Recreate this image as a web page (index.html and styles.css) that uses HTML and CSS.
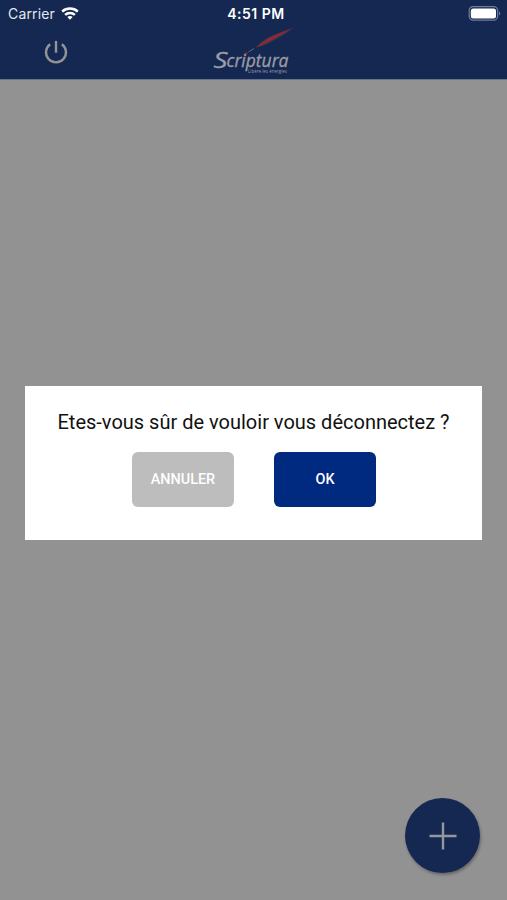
FILE: index.html
```html
<!DOCTYPE html>
<html lang="fr">
  <head>
    <meta charset="utf-8">
    <title>Scriptura</title>
    <link rel="stylesheet" href="styles.css">
  </head>
  <body>
    <header class="header">
      <div class="status-bar">
        <div class="carrier">
          <span>Carrier</span>
          <svg class="wifi" width="18" height="13" viewBox="0 0 18 13" fill="none" stroke="#fff" stroke-width="2.5">
            <path d="M1.200 4.600C5.600 .6 12.400 .6 16.800 4.600"/>
            <path d="M4.100 7.900c2.800-2.600 7-2.600 9.800 0"/>
            <path d="M9 12.800 6.300 10.100c1.500-1.400 3.900-1.400 5.400 0z" fill="#fff" stroke="none"/>
          </svg>
        </div>
        <div class="time">4:51 PM</div>
        <svg class="battery" width="33" height="15" viewBox="0 0 33 15">
          <rect x="1.200" y=".6" width="28.400" height="13.600" rx="4" fill="none" stroke="#6f7c9c" stroke-width="1.200"/>
          <rect x="2.800" y="2.400" width="25.200" height="10" rx="2.500" fill="#fff"/>
          <path d="M31 5.200c1.700.7 1.700 3.700 0 4.400z" fill="#6f7c9c"/>
        </svg>
      </div>
      <div class="nav-bar">
        <svg class="power" width="24" height="24" viewBox="0 0 24 24" fill="none" stroke="#929496" stroke-width="2.400">
          <path d="M12 .9v11.800"/>
          <path d="M6.200 4.200a10 10 0 1 0 11.600 0"/>
        </svg>
        <svg class="logo" width="84" height="50" viewBox="0 0 84 50">
          <path d="M45.500 20.500C49 17 54 12.500 60 9.500C67 6 76 3 84 .5C79 4.500 73 8.500 66 12.500C59 16 52 20 45.500 20.500Z" fill="#30344f"/>
          <path d="M46.500 20C50 16.500 55 12.800 61 9.800C67 7 74 4.500 81 1.800C75 6.500 69 9.500 63 12.800C57 16 52 18.500 46.500 20Z" fill="#872b35"/>
          <path d="M34 27c.5-1.500 2-1.800 4-1.500-.8 1.800-1.800 2.500-3.500 2.600z" fill="#872b35"/>
          <path d="M38.500 25l5.500-3.500" stroke="#6c7180" stroke-width=".9"/>
          <text class="logo-initial" x="3.500" y="41" textLength="14" lengthAdjust="spacingAndGlyphs">S</text>
          <text class="logo-name" x="16.500" y="40" textLength="62" lengthAdjust="spacingAndGlyphs">criptura</text>
          <text class="logo-tagline" x="38" y="45.500" textLength="39" lengthAdjust="spacingAndGlyphs">Libère les énergies</text>
        </svg>
      </div>
    </header>

    <main class="screen">
      <div class="dialog">
        <p class="message">Etes-vous sûr de vouloir vous déconnectez ?</p>
        <div class="actions">
          <button class="btn btn-cancel">ANNULER</button>
          <button class="btn btn-ok">OK</button>
        </div>
      </div>
    </main>

    <button class="add-button" aria-label="Ajouter">
      <svg width="28" height="28" viewBox="0 0 28 28" stroke="#94979c" stroke-width="2.400">
        <path d="M14 .5v27M.5 14h27"/>
      </svg>
    </button>
  </body>
</html>
```
FILE: styles.css
```css
* {
  box-sizing: border-box;
}

body {
  display: flex;
  flex-direction: column;
  height: 900px;
  margin: 0;
  background-color: #929292;
  font-family: Roboto, sans-serif;
  overflow: hidden;
}

.header {
  height: 79px;
  background-color: #152852;
  box-shadow: 0 1px 0 #66758c;
}

.status-bar {
  display: grid;
  grid-template-columns: 1fr auto 1fr;
  align-items: center;
  height: 27px;
  padding: 0 6px 0 8px;
  color: #fff;
  font-family: Inter, sans-serif;
  font-size: 14px;
}

.carrier {
  display: flex;
  align-items: center;
  gap: 6px;
  color: #e3e7ee;
  letter-spacing: 0.15px;
}

.time {
  padding-left: 3px;
  font-weight: 600;
  letter-spacing: 0.5px;
}

.battery {
  justify-self: end;
}

.nav-bar {
  display: grid;
  grid-template-columns: 210px 84px 1fr;
  height: 52px;
}

.power {
  margin: 13px 0 0 44px;
}

.logo {
  display: block;
  overflow: visible;
}

.logo-initial,
.logo-name {
  fill: #9a9da5;
  stroke: #9a9da5;
  stroke-width: 0.3px;
  font-family: "Open Sans", sans-serif;
  font-style: italic;
}

.logo-initial {
  font-size: 22px;
}

.logo-name {
  font-size: 17.5px;
}

.logo-tagline {
  fill: #9297a2;
  font-family: "Open Sans", sans-serif;
  font-size: 5px;
}

.screen {
  flex: 1;
  padding: 307px 25px 0;
}

.dialog {
  height: 154px;
  padding-top: 24px;
  background-color: #fff;
}

.message {
  margin: 0;
  color: #111;
  font-size: 20px;
  line-height: 24px;
  text-align: center;
  white-space: nowrap;
}

.actions {
  display: flex;
  justify-content: center;
  gap: 40px;
  margin-top: 18px;
  padding-left: 1px;
}

.btn {
  width: 102px;
  height: 55px;
  padding: 0;
  border: 0;
  border-radius: 6px;
  color: #fff;
  font-family: Roboto, sans-serif;
  font-size: 14.4px;
  font-weight: 500;
}

.btn-cancel {
  background-color: #bdbdbd;
}

.btn-ok {
  background-color: #002980;
}

/* floats over the screen, bottom right */
.add-button {
  position: absolute;
  right: 27px;
  bottom: 27px;
  display: flex;
  align-items: center;
  justify-content: center;
  width: 75px;
  height: 75px;
  padding: 0;
  border: 0;
  border-radius: 50%;
  background-color: #152852;
  box-shadow: 1px 2px 3px rgba(0, 0, 0, 0.3);
}
```
